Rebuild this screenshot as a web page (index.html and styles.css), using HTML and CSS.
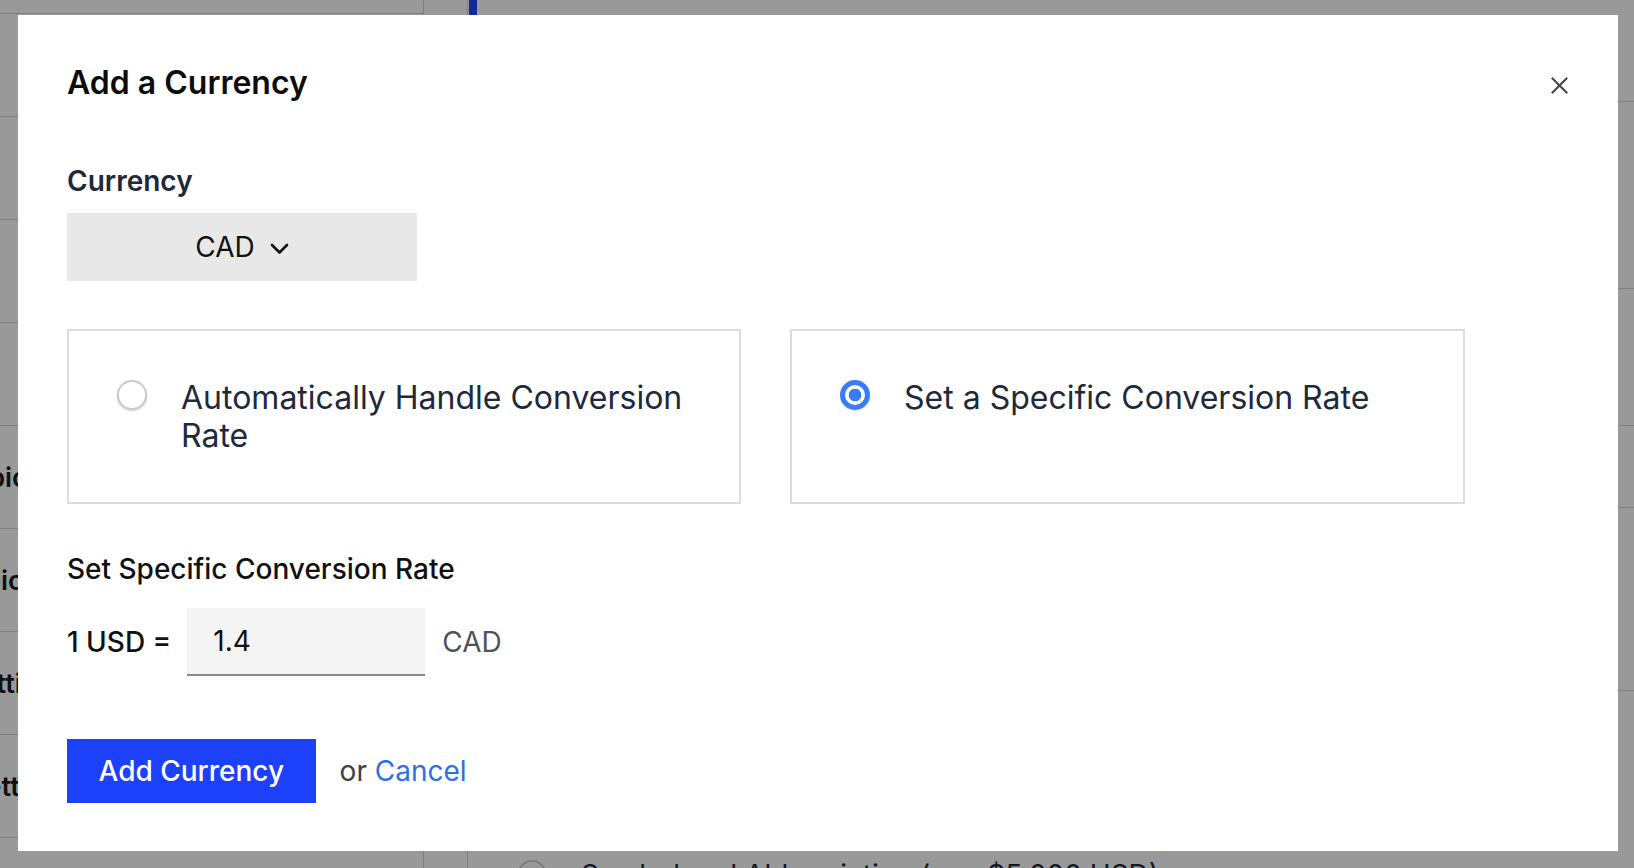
FILE: index.html
```html
<!DOCTYPE html>
<html lang="en">
<head>
<meta charset="utf-8">
<title>Add a Currency</title>
<link rel="stylesheet" href="styles.css">
</head>
<body>
<div class="page">
  <aside class="sidebar">
    <div class="side-head"></div>
    <div class="side-row"></div>
    <div class="side-row"></div>
    <div class="side-row"></div>
    <div class="side-row"></div>
    <div class="side-row"><span class="side-text side-text-1">Topic</span></div>
    <div class="side-row"><span class="side-text side-text-2">Topic</span></div>
    <div class="side-row"><span class="side-text side-text-3">Settings</span></div>
    <div class="side-row"><span class="side-text side-text-4">Settings</span></div>
  </aside>
  <div class="gutter"></div>
  <main class="main">
    <div class="accent"></div>
    <div class="block block-1"></div>
    <div class="block block-2"></div>
    <div class="block block-3"></div>
    <div class="block block-4"></div>
    <div class="block block-5"></div>
    <div class="bg-option">
      <span class="bg-radio"></span>
      <span class="bg-option-text">Symbol and Abbreviation (e.g. $5,000 USD)</span>
    </div>
  </main>
</div>

<div class="overlay">
  <div class="modal" role="dialog" aria-labelledby="modal-title">
    <div class="modal-head">
      <h2 id="modal-title" class="modal-title">Add a Currency</h2>
      <button class="close" aria-label="Close">
        <svg width="17" height="17" viewBox="0 0 17 17" aria-hidden="true">
          <path d="M1.5 1.5 L15.5 15.5 M15.5 1.5 L1.5 15.5" stroke="#444" stroke-width="2" stroke-linecap="square" fill="none"/>
        </svg>
      </button>
    </div>

    <div class="field-label field-label-currency">Currency</div>
    <button class="select">
      <span>CAD</span>
      <svg width="19" height="12" viewBox="0 0 19 12" aria-hidden="true">
        <path d="M2 2 L9.5 9.5 L17 2" stroke="#111" stroke-width="2.6" fill="none" stroke-linecap="round" stroke-linejoin="round"/>
      </svg>
    </button>

    <div class="options">
      <label class="option">
        <span class="radio"></span>
        <span class="option-text">Automatically Handle Conversion Rate</span>
      </label>
      <label class="option">
        <span class="radio radio-checked"></span>
        <span class="option-text">Set a Specific Conversion Rate</span>
      </label>
    </div>

    <div class="field-label field-label-rate">Set Specific Conversion Rate</div>
    <div class="rate-row">
      <span class="rate-prefix">1 USD =</span>
      <div class="rate-input">1.4</div>
      <span class="rate-unit">CAD</span>
    </div>

    <div class="actions">
      <button class="primary">Add Currency</button>
      <span class="or">or <a class="cancel" href="#">Cancel</a></span>
    </div>
  </div>
</div>
</body>
</html>
```

FILE: styles.css
```css
* { box-sizing: border-box; }

html, body {
  margin: 0;
  padding: 0;
  width: 1634px;
  height: 868px;
  overflow: hidden;
  font-family: Inter, "Noto Sans", "Liberation Sans", sans-serif;
  background: #fff;
}

/* ---------- background page ---------- */
.page {
  display: flex;
  height: 868px;
  overflow: hidden;
}

.sidebar {
  width: 424px;
  flex: none;
  border-right: 1px solid #d4d4d4;
  overflow: hidden;
}

.side-head {
  height: 14px;
  border-bottom: 1px solid #d4d4d4;
}

.side-row {
  height: 103px;
  border-bottom: 1px solid #d4d4d4;
  display: flex;
  align-items: center;
}

.side-text {
  font-size: 27px;
  font-weight: 600;
  color: #1b1b1b;
  white-space: nowrap;
}
.side-text-1 { margin-left: -44px; }
.side-text-2 { margin-left: -48px; }
.side-text-3 { margin-left: -37px; }
.side-text-4 { margin-left: -32px; }

.gutter {
  width: 44px;
  flex: none;
  border-right: 1px solid #d4d4d4;
}

.main {
  flex: 1;
  display: flex;
  flex-direction: column;
}

.main > * { flex: none; }

.accent {
  width: 8px;
  height: 20px;
  margin-left: 1px;
  background: #2143ff;
  margin-bottom: -20px;
}

.block { border-bottom: 1px solid #d4d4d4; }
.block-1 { height: 102px; }
.block-2 { height: 187px; }
.block-3 { height: 137px; }
.block-4 { height: 82px; }
.block-5 { height: 183px; }

.bg-option {
  display: flex;
  align-items: center;
  gap: 34px;
  padding-left: 49px;
  margin-top: 167px;
}

.bg-radio {
  width: 30px;
  height: 30px;
  border-radius: 50%;
  border: 2px solid #cfcfcf;
  flex: none;
}

.bg-option-text {
  font-size: 28px;
  color: #1e293b;
  white-space: nowrap;
}

/* ---------- overlay & modal ---------- */
.overlay {
  position: fixed;
  inset: 0;
  background: rgba(0, 0, 0, 0.4);
  padding: 15px 16px 17px 18px;
  display: flex;
}

.modal {
  flex: 1;
  background: #fff;
  padding: 49px 47px 48px 49px;
  display: flex;
  flex-direction: column;
  align-items: flex-start;
}

.modal-head {
  align-self: stretch;
  display: flex;
  justify-content: space-between;
  align-items: flex-start;
  margin-bottom: 63px;
}

.modal-title {
  margin: 0;
  font-size: 32px;
  line-height: 38px;
  font-weight: 600;
  color: #0d0d0d;
}

.close {
  width: 24px;
  height: 24px;
  margin-top: 9px;
  padding: 0;
  border: 0;
  background: transparent;
  display: flex;
  align-items: center;
  justify-content: center;
}

.field-label {
  font-size: 28px;
  line-height: 32px;
  font-weight: 600;
}

.field-label-currency { color: #1e293b; }
.field-label-rate { color: #111; font-weight: 500; margin-bottom: 23px; }

.select {
  margin-top: 16px;
  width: 350px;
  height: 68px;
  border: 0;
  background: #e8e8e8;
  display: flex;
  align-items: center;
  justify-content: center;
  gap: 15px;
  font-family: inherit;
  font-size: 28px;
  color: #111;
  padding: 0;
}

.select svg { margin-top: 3px; }

.options {
  margin-top: 48px;
  margin-bottom: 49px;
  display: grid;
  grid-template-columns: 674px 675px;
  column-gap: 49px;
}

.option {
  border: 2px solid #dcdcdc;
  padding: 48px 30px 48px 48px;
  display: flex;
  align-items: flex-start;
  gap: 34px;
  cursor: pointer;
}

.radio {
  width: 30px;
  height: 30px;
  flex: none;
  margin-top: 1px;
  border-radius: 50%;
  border: 2px solid #cbcbcb;
  background: #fff;
  box-shadow: 0 1px 2px rgba(0, 0, 0, 0.22);
}

.radio-checked {
  border: 5px solid #3b7cf5;
  background: radial-gradient(circle, #3b7cf5 0 6px, #fff 6.6px);
  box-shadow: 0 1px 2px rgba(0, 0, 0, 0.15);
}

.option-text {
  font-size: 32px;
  line-height: 37.5px;
  color: #1e293b;
}

.rate-row {
  display: flex;
  align-items: center;
}

.rate-prefix {
  font-size: 28px;
  font-weight: 500;
  color: #111;
  margin-right: 16px;
}

.rate-input {
  width: 238px;
  height: 68px;
  background: #f4f4f4;
  border-bottom: 2px solid #8a8a8a;
  padding-left: 26px;
  display: flex;
  align-items: center;
  font-size: 28px;
  color: #111;
}

.rate-unit {
  margin-left: 17px;
  font-size: 28px;
  color: #4b5360;
}

.actions {
  margin-top: 63px;
  display: flex;
  align-items: center;
  gap: 24px;
}

.primary {
  height: 64px;
  padding: 0 31.5px;
  border: 0;
  background: #1d40fa;
  color: #fff;
  font-family: inherit;
  font-size: 28px;
  font-weight: 500;
}

.or {
  font-size: 28px;
  color: #404040;
}

.cancel {
  color: #2f6fe4;
  text-decoration: none;
}
```
